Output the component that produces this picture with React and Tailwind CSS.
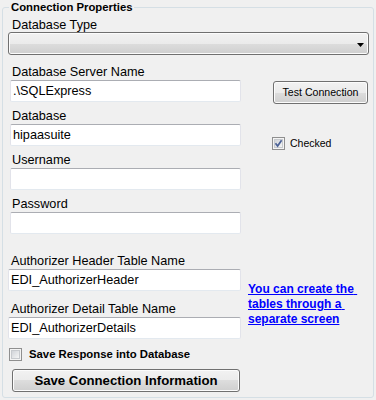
import React from "react";

const btnCls =
  "flex items-center justify-center rounded-[3px] border border-[#707070] bg-[linear-gradient(#f2f2f2_0%,#ebebeb_50%,#dddddd_50%,#cfcfcf_100%)] shadow-[inset_0_0_0_1px_#fcfcfc] text-black";

function Field({ label, value, labelMl, inputMl, inputW }) {
  return (
    <div className="flex flex-col">
      <div className={`h-[14px] text-[12.7px] leading-[14px] ${labelMl}`}>{label}</div>
      <div
        className={`mt-[1px] h-[22px] rounded-[2px] border border-t-[#abadb3] border-x-[#e2e3ea] border-b-[#e3e9ef] bg-white pl-[2px] text-[12.7px] leading-[20px] ${inputMl} ${inputW}`}
      >
        {value}
      </div>
    </div>
  );
}

function CheckBox({ checked, id }) {
  return (
    <svg width="13" height="13" viewBox="0 0 13 13" className="shrink-0">
      <defs>
        <linearGradient id={id} x1="0" y1="0" x2="1" y2="1">
          <stop offset="0" stopColor="#cfd2d7" />
          <stop offset="1" stopColor="#f7f7f7" />
        </linearGradient>
      </defs>
      <rect x="0.5" y="0.5" width="12" height="12" fill="#f4f4f4" stroke="#8f8f8f" />
      <rect x="2.5" y="2.5" width="8" height="8" fill={`url(#${id})`} stroke="#c7cace" />
      {checked && (
        <path d="M3.5 6.3 L5.6 9 L9.6 3.2" fill="none" stroke="#4b6196" strokeWidth="1.7" />
      )}
    </svg>
  );
}

export default function App() {
  return (
    <div className="h-[400px] w-[376px] overflow-hidden bg-[#f0f0f0] font-['Liberation_Sans',Arial,sans-serif] text-black">
      <fieldset className="m-0 ml-[2px] h-[398px] w-[372px] min-w-0 rounded-[3px] border border-[#d5dfe5] p-0">
        <legend className="ml-[6px] px-[2px] text-[11.33px] font-bold leading-[14px]">
          Connection Properties
        </legend>
        <div className="flex flex-col">
          <div className="ml-[9px] mt-[4px] h-[14px] text-[12.7px] leading-[14px]">Database Type</div>
          <div className={`ml-[5px] h-[23px] w-[361px] justify-end! pr-[4px] ${btnCls}`}>
            <svg width="7" height="4" viewBox="0 0 7 4" className="mt-[2px]">
              <polygon points="0,0 7,0 3.5,4" fill="#000" />
            </svg>
          </div>

          <div className="mt-[10px] flex">
            <div className="ml-[7px] flex w-[231px] flex-col gap-[7px]">
              <Field label="Database Server Name" value=".\SQLExpress" labelMl="ml-[2px]" inputMl="" inputW="w-[231px]" />
              <Field label="Database" value="hipaasuite" labelMl="ml-[2px]" inputMl="" inputW="w-[231px]" />
              <Field label="Username" value="" labelMl="ml-[2px]" inputMl="" inputW="w-[231px]" />
              <Field label="Password" value="" labelMl="ml-[2px]" inputMl="" inputW="w-[231px]" />
            </div>
            <div className="ml-[31px] flex flex-col">
              <div className={`ml-[1px] mt-[16px] h-[23px] w-[95px] text-[10.6px] leading-[13px] ${btnCls}`}>
                Test Connection
              </div>
              <div className="mt-[33px] flex items-center gap-[5px]">
                <CheckBox checked id="cb1" />
                <span className="text-[10.5px] leading-[13px]">Checked</span>
              </div>
            </div>
          </div>

          <div className="mt-[20px] flex">
            <div className="ml-[5px] flex w-[233px] flex-col gap-[11px]">
              <Field label="Authorizer Header Table Name" value="EDI_AuthorizerHeader" labelMl="ml-[3px]" inputMl="" inputW="w-[233px]" />
              <Field label="Authorizer Detail Table Name" value="EDI_AuthorizerDetails" labelMl="ml-[3px]" inputMl="" inputW="w-[233px]" />
            </div>
            <div className="ml-[7px] mt-[28px] text-[12px] font-bold leading-[15px] text-[#0000ff] underline">
              You can create the{"\u00a0"}
              <br />
              tables through a{"\u00a0"}
              <br />
              separate screen
            </div>
          </div>

          <div className="ml-[6px] mt-[9px] flex items-center gap-[7px]">
            <CheckBox id="cb2" />
            <span className="text-[11.33px] font-bold leading-[13px]">Save Response into Database</span>
          </div>

          <div className={`ml-[9px] mt-[8px] h-[23px] w-[228px] text-[13.2px] font-bold leading-[16px] ${btnCls}`}>
            Save Connection Information
          </div>
        </div>
      </fieldset>
    </div>
  );
}
